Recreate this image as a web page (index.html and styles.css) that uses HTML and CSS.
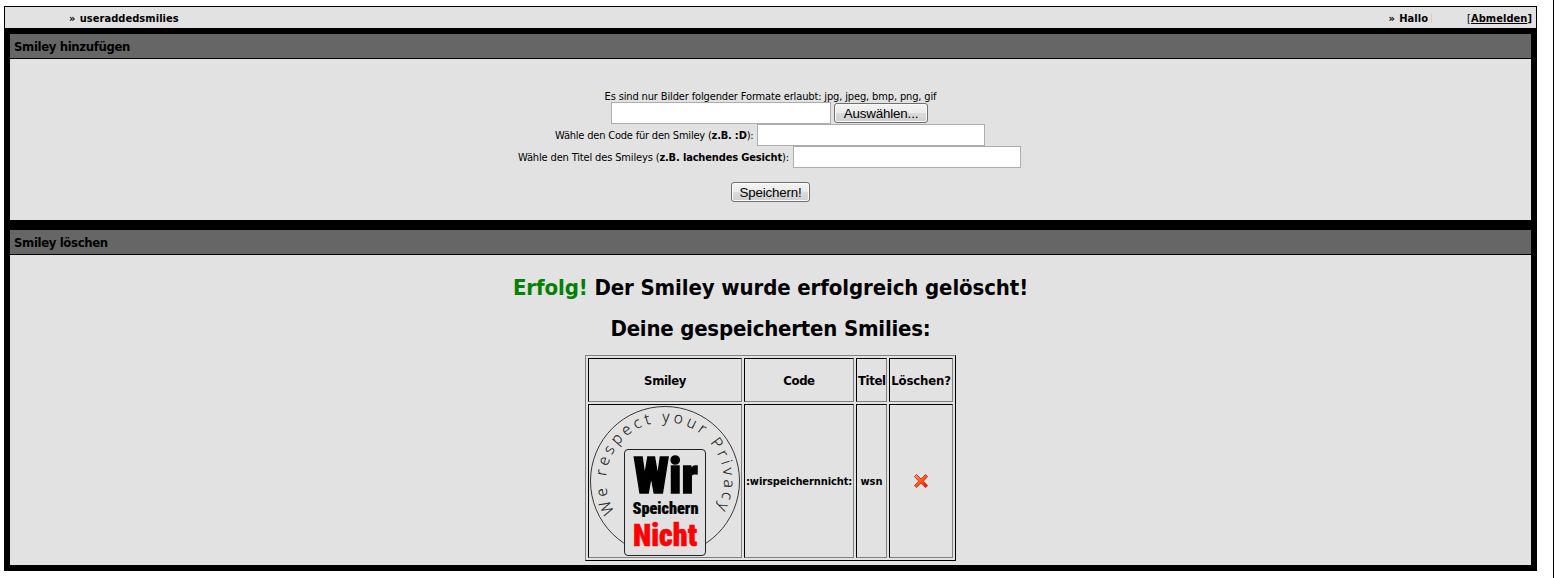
FILE: index.html
```
<!DOCTYPE html>
<html lang="de">
<head>
<meta charset="utf-8">
<title>useraddedsmilies</title>
<link rel="stylesheet" href="styles.css">
</head>
<body>
<div class="page">
  <header class="topbar">
    <div class="crumb"><span class="raquo">»</span> <b>useraddedsmilies</b></div>
    <div class="user"><span><span class="raquo">»</span> <b>Hallo</b></span><i class="caret"></i><span class="logout">[<a href="#">Abmelden</a><b>]</b></span></div>
  </header>
  <main class="frame">
    <section class="panel">
      <h3 class="bar"><span class="bar-add">Smiley hinzufügen</span></h3>
      <form class="form">
        <div class="hint"><span>Es sind nur Bilder folgender Formate erlaubt: jpg, jpeg, bmp, png, gif</span></div>
        <div class="row odd"><input class="file" type="text"><button class="btn pick" type="button">Auswählen...</button></div>
        <div class="row"><label class="l-code">Wähle den Code für den Smiley (<b>z.B. :D</b>):</label><input class="field" type="text"></div>
        <div class="row odd"><label class="l-title">Wähle den Titel des Smileys (<b>z.B. lachendes Gesicht</b>):</label><input class="field" type="text"></div>
        <button class="btn save" type="button">Speichern!</button>
      </form>
    </section>
    <section class="panel">
      <h3 class="bar"><span class="bar-del">Smiley löschen</span></h3>
      <div class="list">
        <h1 class="success"><span class="ok">Erfolg!</span> Der Smiley wurde erfolgreich gelöscht!</h1>
        <h1 class="saved">Deine gespeicherten Smilies:</h1>
        <table class="smilies">
          <colgroup><col class="c1"><col class="c2"><col class="c3"><col class="c4"></colgroup>
          <tr class="head"><th>Smiley</th><th>Code</th><th><span class="t-titel">Titel</span></th><th><span class="t-del">Löschen?</span></th></tr>
          <tr class="item">
            <td>
              <svg class="badge" width="150" height="150" viewBox="0 0 150 150">
                <defs><path id="arc" d="M24.7 105.8A59 59 0 1 1 125.3 105.8"/></defs>
                <circle cx="75" cy="75" r="74.5" fill="none" stroke="#222" stroke-width=".9"/>
                <text class="motto"><textPath href="#arc" textLength="246">We respect your Privacy</textPath></text>
                <rect x="34.5" y="43.5" width="81" height="106" rx="3.5" fill="#e1e1e1" stroke="#222"/>
                <text class="heavy wir" font-size="50" x="43.5" y="87" textLength="64.5" lengthAdjust="spacingAndGlyphs">Wir</text>
                <text class="heavy small" font-size="16" x="42.5" y="107.7" textLength="66" lengthAdjust="spacingAndGlyphs">Speichern</text>
                <text class="heavy red" font-size="32" x="43" y="139.8" textLength="64" lengthAdjust="spacingAndGlyphs">Nicht</text>
              </svg>
            </td>
            <td><span class="t-code">:wirspeichernnicht:</span></td>
            <td><span class="t-wsn">wsn</span></td>
            <td>
              <svg class="cross" width="16" height="16" viewBox="0 0 16 16">
                <defs><linearGradient id="red" x1="0" y1="0" x2="1" y2="1"><stop offset="0" stop-color="#ff9a5c"/><stop offset=".5" stop-color="#ff5a22"/><stop offset="1" stop-color="#f00000"/></linearGradient></defs>
                <path d="M3.5 1.5L8 6L12.5 1.5L14.6 3.6L10.3 8.2L14.6 12.6L12.6 14.6L8 10.2L3.5 14.6L1.4 12.6L5.8 8.2L1.4 3.6Z" fill="url(#red)" stroke="#cf2b10" stroke-width=".9" stroke-linejoin="round"/>
              </svg>
            </td>
          </tr>
        </table>
      </div>
    </section>
  </main>
</div>
</body>
</html>
```
FILE: styles.css
```
* { box-sizing: border-box; }
body {
  margin: 0;
  height: 578px;
  overflow: hidden;
  background: #fff;
  border-right: 1px solid #000;
  padding: 6px 0 0 4px;
  font: 11px/14px "DejaVu Sans Condensed", "DejaVu Sans", sans-serif;
  font-stretch: condensed;
  color: #000;
}
.page { width: 1533px; }
.topbar {
  height: 22px;
  border: 1px solid #000;
  border-bottom: 0;
  background: #e2e2e2;
  display: flex;
  justify-content: space-between;
  align-items: center;
  padding: 2px 4px 0 64px;
  white-space: nowrap;
}
.crumb, .user { letter-spacing: 0.06px; }
.raquo { margin-right: 1px; font-weight: bold; }
.user { display: flex; align-items: center; }
.caret { width: 1px; height: 9px; background: #eac6a4; margin: 0 35px 0 3px; }
.user a { color: #000; font-weight: bold; }
.frame {
  background: #000;
  padding: 6px;
  display: grid;
  gap: 10px;
}
.panel { background: #e2e2e2; }
.bar {
  margin: 0;
  height: 25px;
  background: #666;
  border-bottom: 1px solid #000;
  padding: 0 4px;
  font-size: 13px;
  line-height: 25px;
  letter-spacing: -0.36px;
}
.form {
  height: 161px;
  padding-top: 29px;
  display: flex;
  flex-direction: column;
  align-items: center;
  white-space: nowrap;
}
.hint { height: 14px; line-height: 18px; letter-spacing: -0.14px; }
.row { display: flex; align-items: center; height: 22px; padding-right: 1px; }
.row.odd { padding-right: 2px; }
.row label { letter-spacing: -0.2px; margin-right: 4px; padding-top: 2px; }
.l-code { width: 198px; }
.row .l-title { width: 271px; letter-spacing: -0.15px; }
input { border: 1px solid #abadb3; background: #fff; height: 22px; padding: 0; }
.file { width: 220px; margin-right: 3px; }
.field { width: 228px; }
.btn {
  height: 20px;
  padding: 0;
  border: 1px solid #707070;
  border-radius: 3px;
  background: linear-gradient(#f4f4f4, #ebebeb 48%, #dcdcdc 50%, #cfcfcf);
  box-shadow: inset 0 0 0 1px #fafafa;
  font: 13.33px/17px "Liberation Sans", Arial, sans-serif;
  letter-spacing: -0.15px;
  color: #000;
}
.pick { width: 94px; }
.save { width: 79px; margin-top: 14px; }
.list {
  height: 310px;
  padding-top: 19px;
  display: flex;
  flex-direction: column;
  align-items: center;
}
.list h1 { margin: 0; font-size: 22px; line-height: 28px; letter-spacing: -0.11px; white-space: nowrap; }
.list .saved { margin: 13px 0 12px; letter-spacing: -0.21px; }
.ok { color: #008000; }
.smilies {
  width: 371px;
  table-layout: fixed;
  border: 1px solid;
  border-color: #808080 #000 #000 #808080;
  border-spacing: 2px;
}
.c1 { width: 154px; }
.c2 { width: 110px; }
.c3 { width: 31px; }
.c4 { width: 64px; }
.smilies th, .smilies td {
  padding: 1px;
  border: 1px solid;
  border-color: #000 #808080 #808080 #000;
  text-align: center;
  vertical-align: middle;
  font-weight: bold;
  white-space: nowrap;
}
.smilies th { padding-top: 3px; letter-spacing: -0.4px; }
.head { height: 44px; font-size: 13px; }
.item { height: 154px; }
.smilies span { display: inline-block; padding-top: 1px; }
.head span { padding: 0; }
.head .t-del { letter-spacing: -0.15px; }
.t-code { letter-spacing: -0.1px; }
.badge, .cross { display: block; margin: 0 auto; }
.badge { font-stretch: normal; }
.motto { font-family: "Open Sans", sans-serif; font-weight: 300; font-size: 15.5px; fill: #111; stroke: #111; stroke-width: .15px; }
.heavy { font-family: Roboto, sans-serif; font-weight: 900; font-stretch: condensed; stroke: #000; stroke-width: .6px; }
.wir { stroke-width: 1.4px; }
.small { stroke-width: .2px; }
.red { fill: #f00; stroke: #f00; }
```
